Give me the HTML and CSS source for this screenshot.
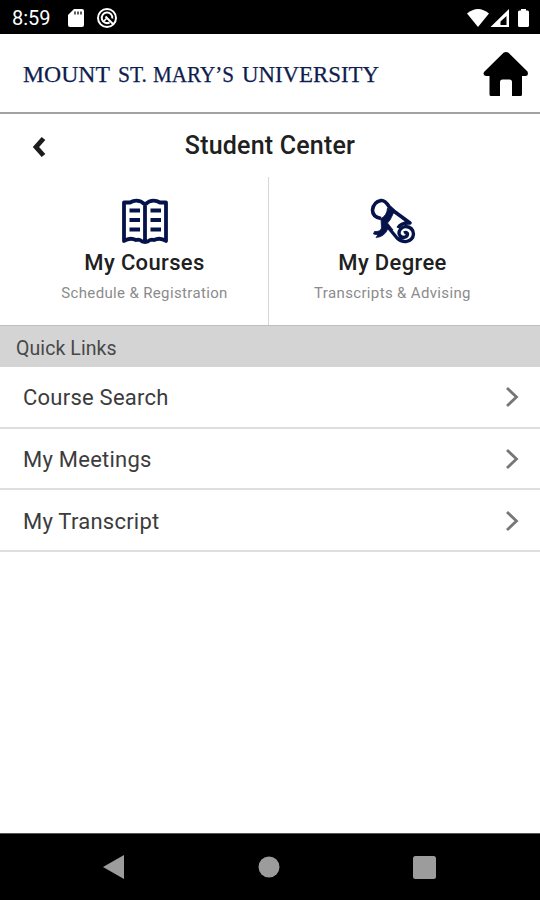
FILE: index.html
```html
<!DOCTYPE html>
<html lang="en">
<head>
<meta charset="utf-8">
<title>Student Center</title>
<link rel="stylesheet" href="styles.css">
</head>
<body>
<div class="screen">
  <div class="status">
    <span class="time">8:59</span>
    <svg class="sd" width="16" height="20" viewBox="0 0 16 20"><path fill="#fff" d="M6 1h8q2 0 2 2v14q0 2-2 2H2q-2 0-2-2V7z"/><path stroke="#333" stroke-width="1.6" d="M7 3.500v3M10 3.500v3M13 3.500v3"/></svg>
    <svg class="at" width="22" height="22" viewBox="0 0 22 22" fill="none" stroke="#fff"><circle cx="11" cy="11" r="9" stroke-width="2"/><path stroke-width="2" d="M13.500 15.500A5.300 5.300 0 1 1 16.300 11.500M9.500 9.500l8 8"/><path stroke-width="1.600" d="M7.500 14.500l3-3"/></svg>
    <svg class="signals" width="64" height="20" viewBox="0 0 64 20"><path fill="#fff" d="M0 5.500Q11 -3.500 22 5.500L11 19z"/><path fill="#fff" fill-rule="evenodd" d="M23.500 19L42 1v18zM33.500 17h6V8l-6 5.500z"/><path fill="#fff" d="M54 1h5v1.500h1.500q1.500 0 1.500 1.500v13.500q0 1.500-1.500 1.500h-8q-1.500 0-1.500-1.500V4q0-1.500 1.500-1.500H54z"/></svg>
  </div>
  <header class="brand">
    <svg class="logo" width="360" height="30" viewBox="0 0 360 30">
      <text x="0" y="22.500" textLength="87" lengthAdjust="spacingAndGlyphs">MOUNT</text>
      <text x="95" y="22.500" textLength="29" lengthAdjust="spacingAndGlyphs">ST.</text>
      <text x="130" y="22.500" textLength="81" lengthAdjust="spacingAndGlyphs">MARY’S</text>
      <text x="219" y="22.500" textLength="137" lengthAdjust="spacingAndGlyphs">UNIVERSITY</text>
    </svg>
    <svg class="home" width="46" height="46" viewBox="0 0 46 46"><path d="M20.500 1.800Q23 0 25.500 1.800L44.500 20.500Q46 25 42.500 25H39v18.500q0 1.500-1.500 1.500H29V31q0-2.500-2.500-2.500h-7Q17 28.500 17 31v14H8q-1.500 0-1.500-1.500V25H3Q-.5 24.500 1 21z"/></svg>
  </header>
  <div class="titlebar">
    <svg class="back" width="16" height="24" viewBox="0 0 16 24"><path d="M12.500 3.500L5 12l7.500 8.500" fill="none" stroke="#1c1c1c" stroke-width="4.800"/></svg>
    <h1>Student Center</h1>
  </div>
  <div class="tiles">
    <div class="tile tile-courses">
      <svg width="48" height="48" viewBox="0 0 48 48" fill="none" stroke="#05134a"><path stroke-width="3.800" stroke-linejoin="round" d="M24 7.500Q17 1 9 5.500H3V44q6-4 12-1 2-.5 4 0 2 2 5 2t5-2q2-.5 4 0 6-3 12 1V5.500H39Q31 1 24 7.500zM24 7.500v37"/><path stroke-width="3.800" d="M8.500 13.500H19M8.500 23H19M8.500 32.500H19M29.500 13.500H40M29.500 23H40M29.500 32.500H40"/></svg>
      <h2>My Courses</h2>
      <p>Schedule &amp; Registration</p>
    </div>
    <div class="tile tile-degree">
      <svg width="48" height="48" viewBox="0 0 48 48" fill="none" stroke="#05134a" stroke-width="3.600" stroke-linejoin="round"><path d="M12 21.500Q3.500 20 3.500 13 4.500 5 12 3.500q4-.5 8 6l6 5.500 15 11q-9-.5-12 5"/><path d="M18.500 29.500L28 41q4 4 9.500 3.500Q44 43 44.500 37 44 30 36.500 29.500 30 31 30 36.500q1 4 5 4 4-1 3.500-4-1-2-3.500-.5" stroke-width="3.300"/><path fill="#05134a" stroke-width=".8" d="M18.500 11l6.500 4-4 8-2.500 3 5.500 7-5-1.500q-3.500 8.500-12 9l2-2.500-4.500-1 1-2.500q6 .5 7-3.500l-.5-9.500q6-3 6.500-10.500z"/></svg>
      <h2>My Degree</h2>
      <p>Transcripts &amp; Advising</p>
    </div>
  </div>
  <div class="section">Quick Links</div>
  <div class="row"><span>Course Search</span><svg width="16" height="24" viewBox="0 0 16 24"><path d="M3 3l9.500 9L3 21"/></svg></div>
  <div class="row"><span>My Meetings</span><svg width="16" height="24" viewBox="0 0 16 24"><path d="M3 3l9.500 9L3 21"/></svg></div>
  <div class="row"><span>My Transcript</span><svg width="16" height="24" viewBox="0 0 16 24"><path d="M3 3l9.500 9L3 21"/></svg></div>
  <div class="space"></div>
  <nav class="nav">
    <svg width="22" height="26" viewBox="0 0 22 26"><path d="M0 13L21 1v24z"/></svg>
    <svg width="22" height="22" viewBox="0 0 22 22"><circle cx="11" cy="11" r="10.500"/></svg>
    <svg width="23" height="23" viewBox="0 0 23 23"><rect width="23" height="23" rx="2.500"/></svg>
  </nav>
</div>
</body>
</html>
```
FILE: styles.css
```css
* { box-sizing: border-box; }
body { margin: 0; background: #fff; font-family: Roboto, sans-serif; }
h1, h2, p { margin: 0; white-space: nowrap; }
svg { display: block; flex: none; }
.screen { width: 540px; height: 900px; display: flex; flex-direction: column; overflow: hidden; }
.status { height: 34px; flex: none; background: #000; color: #fff; display: flex; align-items: center; padding: 2px 9px 0 12px; }
.time { font-size: 20px; line-height: 24px; width: 56px; }
.at { margin-left: 12px; }
.signals { margin-left: auto; }
.brand { height: 80px; flex: none; border-bottom: 2px solid #a2a2a2; display: flex; align-items: center; justify-content: space-between; padding: 2px 11px 0 23px; }
.logo { fill: #0e1c4e; stroke: #0e1c4e; stroke-width: .25px; font: 24px "Liberation Serif", serif; overflow: visible; }
.titlebar { height: 63px; flex: none; display: grid; grid-template-columns: 60px 1fr 60px; align-items: center; }
.back { margin: 3px 0 0 31px; }
h1 { font-size: 25px; line-height: 30px; font-weight: 500; color: #202020; text-align: center; letter-spacing: .2px; }
.tiles { height: 149px; flex: none; display: grid; grid-template-columns: 269px 1fr; border-bottom: 1px solid #bebebe; }
.tile { display: flex; flex-direction: column; align-items: center; padding-top: 20px; }
.tile-courses { border-right: 1px solid #d6d6d6; padding-left: 21px; }
.tile-degree { padding-right: 24px; }
h2 { font-size: 22px; line-height: 28px; font-weight: 500; color: #202020; margin-top: 4px; letter-spacing: .35px; }
.tile p { font-size: 15px; line-height: 20px; color: #8b8b8b; margin-top: 6px; letter-spacing: .35px; }
.section { height: 41px; flex: none; background: #d4d4d4; color: #484848; font-size: 19.5px; line-height: 45px; padding-left: 16px; letter-spacing: .08px; }
.row { height: 61.7px; flex: none; border-bottom: 2px solid #dedede; display: flex; align-items: center; justify-content: space-between; padding: 1px 20px 0 23px; color: #3c3c3c; font-size: 22px; letter-spacing: .24px; }
.row span { padding-top: 1px; }
.row path { fill: none; stroke: #777; stroke-width: 2.8; }
.space { flex: 1; }
.nav { height: 67px; flex: none; background: #000; border-top: 1px solid #555; display: flex; align-items: center; justify-content: space-between; padding: 0 104px 0 103px; fill: #9c9c9c; }
```
